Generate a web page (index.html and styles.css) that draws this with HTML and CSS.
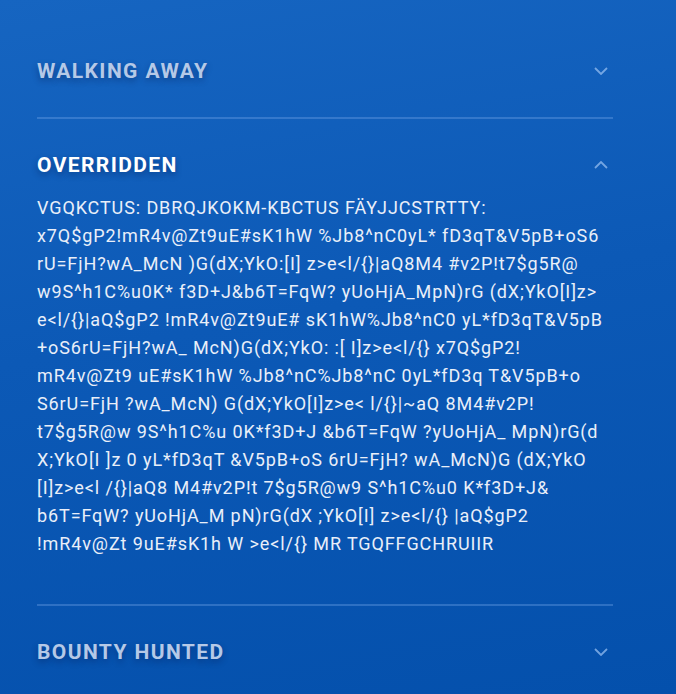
FILE: index.html
```html
<!DOCTYPE html>
<html lang="en">
<head>
<meta charset="utf-8">
<title>Accordion</title>
<link rel="stylesheet" href="styles.css">
</head>
<body>
<div class="page">
  <div class="accordion">
    <div class="item">
      <div class="header">
        <h3 class="title">WALKING AWAY</h3>
        <svg class="chev" width="14" height="8" viewBox="0 0 14 8"><path d="M1 1 L7 7 L13 1" fill="none" stroke="currentColor" stroke-width="1.8"/></svg>
      </div>
    </div>
    <div class="item open">
      <div class="header">
        <h3 class="title">OVERRIDDEN</h3>
        <svg class="chev" width="14" height="8" viewBox="0 0 14 8"><path d="M1 7 L7 1 L13 7" fill="none" stroke="currentColor" stroke-width="1.8"/></svg>
      </div>
      <p class="body">VGQKCTUS: DBRQJKOKM-KBCTUS FÄYJJCSTRTTY:<br>x7Q$gP2!mR4v@Zt9uE#sK1hW %Jb8^nC0yL* fD3qT&amp;V5pB+oS6<br>rU=FjH?wA_McN )G(dX;YkO:[I] z&gt;e&lt;l/{}|aQ8M4 #v2P!t7$g5R@<br>w9S^h1C%u0K* f3D+J&amp;b6T=FqW? yUoHjA_MpN)rG (dX;YkO[I]z&gt;<br>e&lt;l/{}|aQ$gP2 !mR4v@Zt9uE# sK1hW%Jb8^nC0 yL*fD3qT&amp;V5pB<br>+oS6rU=FjH?wA_ McN)G(dX;YkO: :[ I]z&gt;e&lt;l/{} x7Q$gP2!<br>mR4v@Zt9 uE#sK1hW %Jb8^nC%Jb8^nC 0yL*fD3q T&amp;V5pB+o<br>S6rU=FjH ?wA_McN) G(dX;YkO[I]z&gt;e&lt; l/{}|~aQ 8M4#v2P!<br>t7$g5R@w 9S^h1C%u 0K*f3D+J &amp;b6T=FqW ?yUoHjA_ MpN)rG(d<br>X;YkO[I ]z 0 yL*fD3qT &amp;V5pB+oS 6rU=FjH? wA_McN)G (dX;YkO<br>[I]z&gt;e&lt;l /{}|aQ8 M4#v2P!t 7$g5R@w9 S^h1C%u0 K*f3D+J&amp;<br>b6T=FqW? yUoHjA_M pN)rG(dX ;YkO[I] z&gt;e&lt;l/{} |aQ$gP2<br>!mR4v@Zt 9uE#sK1h W &gt;e&lt;l/{} MR TGQFFGCHRUIIR</p>
    </div>
    <div class="item last">
      <div class="header">
        <h3 class="title">BOUNTY HUNTED</h3>
        <svg class="chev" width="14" height="8" viewBox="0 0 14 8"><path d="M1 1 L7 7 L13 1" fill="none" stroke="currentColor" stroke-width="1.8"/></svg>
      </div>
    </div>
  </div>
</div>
</body>
</html>
```
FILE: styles.css
```css
html, body {
  margin: 0;
  padding: 0;
  height: 100%;
}
body {
  background: linear-gradient(170deg, #1665c1 0%, #0c59b6 45%, #0450ac 100%);
  font-family: Roboto, "Liberation Sans", sans-serif;
  overflow: hidden;
}
.page {
  padding: 25px 0 0 37px;
}
.accordion {
  width: 576px;
}
.item {
  border-bottom: 2px solid rgba(120, 170, 235, 0.35);
}
.item.last {
  border-bottom: none;
}
.header {
  display: flex;
  align-items: center;
  justify-content: space-between;
  padding: 32px 0;
}
.item.open .header {
  padding-bottom: 15px;
}
.title {
  margin: 0;
  font-size: 21px;
  line-height: 28px;
  font-weight: 700;
  letter-spacing: 1.4px;
  color: #b5c9e7;
  text-shadow: 0 3px 6px rgba(0, 20, 70, 0.4);
}
.item.open .title {
  color: #ffffff;
}
.chev {
  display: block;
  margin-right: 5px;
  color: rgba(150, 190, 240, 0.75);
}
.body {
  margin: 0;
  padding-bottom: 46px;
  font-size: 18px;
  line-height: 28px;
  letter-spacing: 0.9px;
  color: #e9eff9;
  white-space: nowrap;
}
```
